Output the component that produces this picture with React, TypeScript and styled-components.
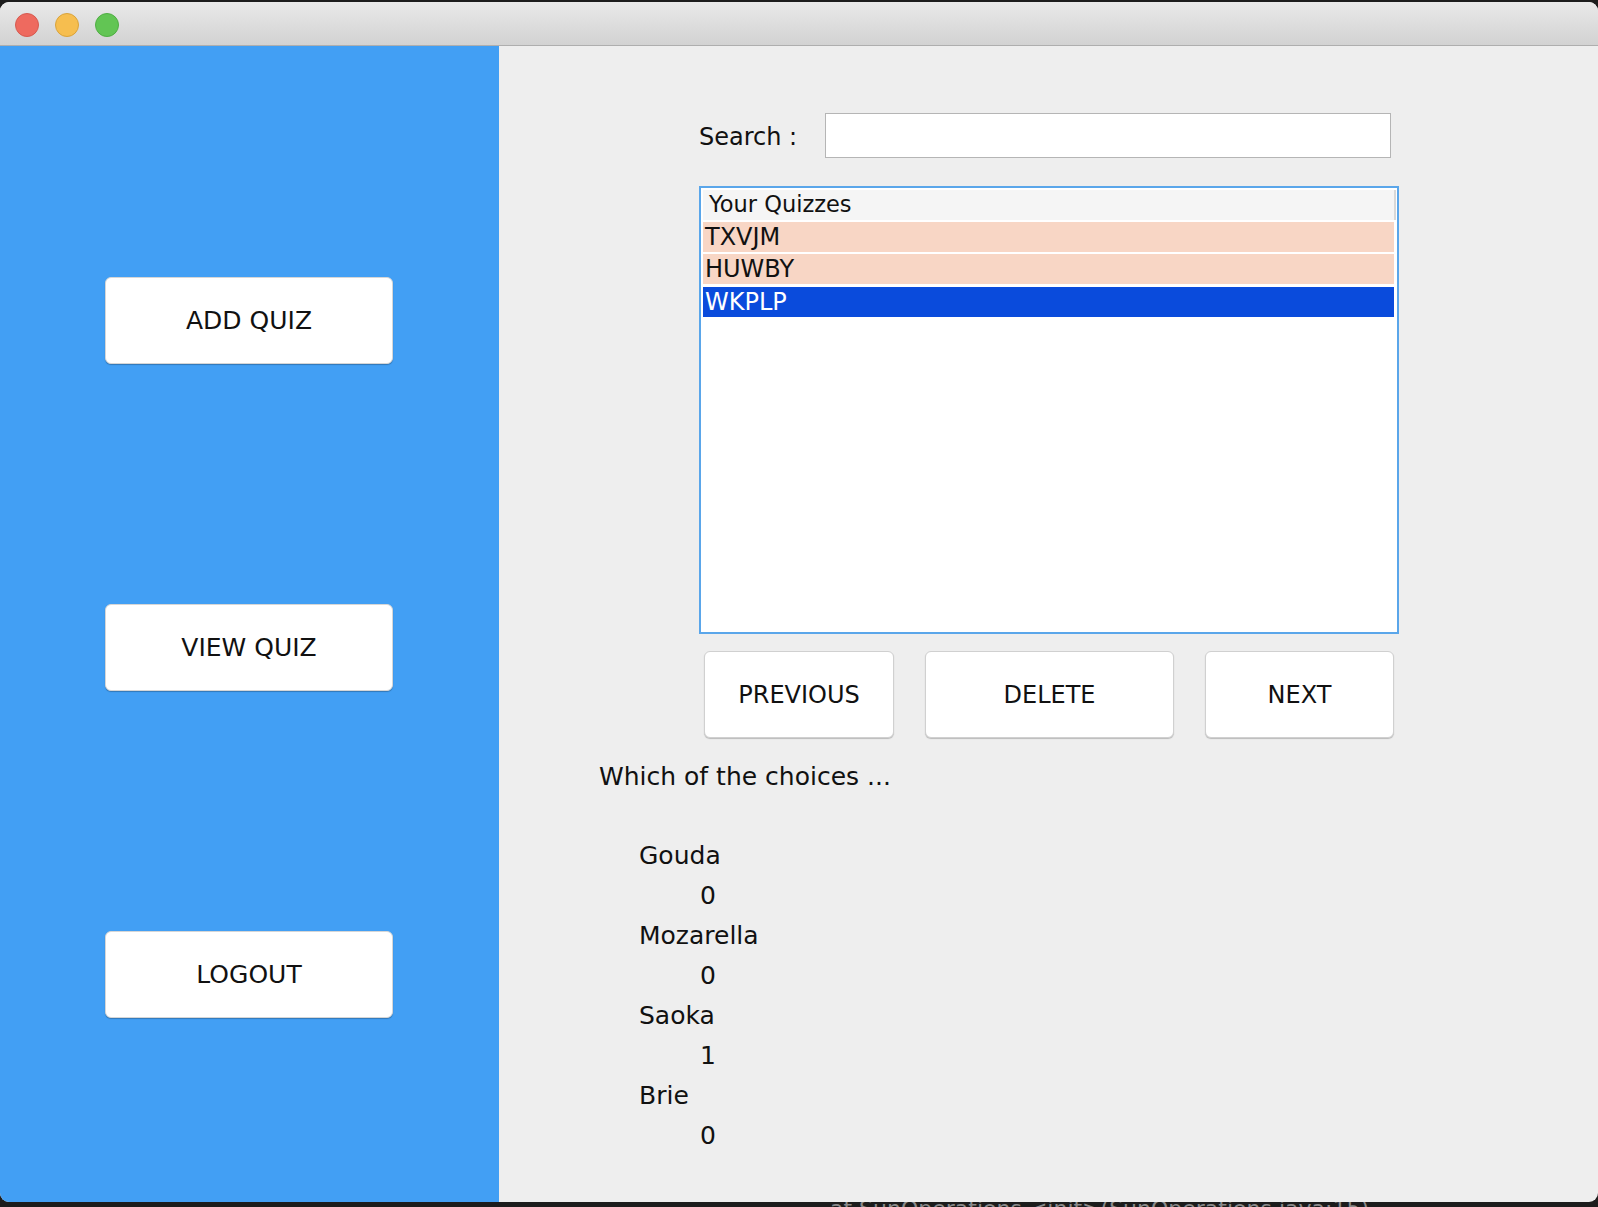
import React from "react";
import styled, { createGlobalStyle } from "styled-components";

const Global = createGlobalStyle`
  html, body { margin: 0; padding: 0; background: #1c1c1c; }
  body { font-family: "Lucida Grande", "DejaVu Sans", sans-serif; }
  * { box-sizing: border-box; }
`;

const Desktop = styled.div`
  width: 1598px;
  height: 1207px;
  background: #1c1c1c;
  padding-top: 2px;
  display: flex;
  flex-direction: column;
  overflow: hidden;
`;

const Window = styled.div`
  width: 1598px;
  height: 1200px;
  border-radius: 9px;
  overflow: hidden;
  display: flex;
  flex-direction: column;
  background: #eeeeee;
`;

const TitleBar = styled.div`
  height: 44px;
  flex: none;
  background: linear-gradient(#e9e9e9, #d2d2d2);
  border-bottom: 1px solid #aeaeae;
  display: flex;
  align-items: center;
  gap: 16px;
  padding-left: 15px;
  padding-top: 3px;
`;

const Light = styled.span<{ $c: string; $b: string }>`
  width: 24px;
  height: 24px;
  border-radius: 50%;
  background: ${(p) => p.$c};
  border: 1px solid ${(p) => p.$b};
`;

const Body = styled.div`
  flex: 1;
  display: flex;
  min-height: 0;
`;

const Sidebar = styled.div`
  width: 499px;
  flex: none;
  background: #429ff4;
  display: flex;
  flex-direction: column;
  padding: 231px 0 0 105px;
  gap: 240px;
`;

const SideButton = styled.button`
  width: 288px;
  height: 87px;
  background: #ffffff;
  border: 1px solid #d6d6d6;
  border-radius: 6px;
  box-shadow: 0 1px 1px rgba(0, 0, 0, 0.25);
  font-family: "Lucida Grande", "DejaVu Sans", sans-serif;
  font-size: 25px;
  color: #111;
  padding: 0;
  cursor: pointer;
`;

const Main = styled.div`
  flex: 1;
  display: flex;
  flex-direction: column;
  padding: 67px 0 0 100px;
  color: #111;
`;

const Block = styled.div`
  display: flex;
  flex-direction: column;
  padding-left: 100px;
  width: 800px;
`;

const SearchRow = styled.div`
  display: flex;
  align-items: center;
  height: 45px;
`;

const Label = styled.span`
  font-size: 24px;
  width: 126px;
  padding-top: 2px;
`;

const SearchInput = styled.input`
  width: 566px;
  height: 45px;
  border: 1px solid #b5b5b5;
  background: #fff;
  outline: none;
  font-size: 22px;
`;

const ListBox = styled.div`
  margin-top: 28px;
  width: 700px;
  height: 448px;
  border: 2px solid #5aa6ea;
  background: #fff;
  padding: 2px 3px 0 2px;
  display: flex;
  flex-direction: column;
  gap: 2px;
`;

const Header = styled.div`
  height: 30px;
  background: #f5f5f5;
  font-size: 22.5px;
  display: flex;
  align-items: center;
  padding-left: 6px;
  padding-bottom: 2px;
  border-right: 2px solid #d8d8d8;
  margin-right: -2px;
`;

const Row = styled.div<{ $selected?: boolean }>`
  height: 30px;
  margin-top: ${(p) => (p.$selected ? "1px" : "0")};
  background: ${(p) => (p.$selected ? "#0a4bdc" : "#f8d6c5")};
  color: ${(p) => (p.$selected ? "#ffffff" : "#111")};
  font-size: 24px;
  display: flex;
  align-items: center;
  padding-left: 2px;
`;

const ButtonRow = styled.div`
  margin-top: 17px;
  display: flex;
  gap: 31px;
  padding-left: 5px;
`;

const ActionButton = styled.button<{ $w: number }>`
  width: ${(p) => p.$w}px;
  height: 87px;
  background: #ffffff;
  border: 1px solid #d0d0d0;
  border-radius: 6px;
  box-shadow: 0 1px 1px rgba(0, 0, 0, 0.22);
  font-family: "Lucida Grande", "DejaVu Sans", sans-serif;
  font-size: 24px;
  color: #111;
  padding: 0;
`;

const Question = styled.div`
  margin-top: 19px;
  height: 40px;
  line-height: 40px;
  font-size: 25px;
`;

const Choices = styled.div`
  margin-top: 39px;
  padding-left: 40px;
  display: flex;
  flex-direction: column;
`;

const Choice = styled.div`
  height: 40px;
  line-height: 40px;
  font-size: 25px;
`;

const Count = styled(Choice)`
  padding-left: 61px;
`;

const Terminal = styled.div`
  height: 5px;
  overflow: hidden;
  padding-left: 830px;
  color: #8a8a8a;
  font-family: "DejaVu Sans", sans-serif;
  font-size: 22px;
  line-height: 14px;
  white-space: nowrap;
`;

const quizzes = ["TXVJM", "HUWBY", "WKPLP"];
const choices: [string, number][] = [
  ["Gouda", 0],
  ["Mozarella", 0],
  ["Saoka", 1],
  ["Brie", 0],
];

export default function App() {
  return (
    <>
      <Global />
      <Desktop>
        <Window>
          <TitleBar>
            <Light $c="#ee6a5f" $b="#d65a50" />
            <Light $c="#f6be4f" $b="#d9a33b" />
            <Light $c="#62c554" $b="#4fae43" />
          </TitleBar>
          <Body>
            <Sidebar>
              <SideButton>ADD QUIZ</SideButton>
              <SideButton>VIEW QUIZ</SideButton>
              <SideButton>LOGOUT</SideButton>
            </Sidebar>
            <Main>
              <Block>
                <SearchRow>
                  <Label>Search :</Label>
                  <SearchInput />
                </SearchRow>
                <ListBox>
                  <Header>Your Quizzes</Header>
                  {quizzes.map((q, i) => (
                    <Row key={q} $selected={i === 2}>
                      {q}
                    </Row>
                  ))}
                </ListBox>
                <ButtonRow>
                  <ActionButton $w={190}>PREVIOUS</ActionButton>
                  <ActionButton $w={249}>DELETE</ActionButton>
                  <ActionButton $w={189}>NEXT</ActionButton>
                </ButtonRow>
              </Block>
              <Question>Which of the choices ...</Question>
              <Choices>
                {choices.map(([name, n]) => (
                  <React.Fragment key={name}>
                    <Choice>{name}</Choice>
                    <Count>{n}</Count>
                  </React.Fragment>
                ))}
              </Choices>
            </Main>
          </Body>
        </Window>
        <Terminal>at SunOperations.&lt;init&gt;(SunOperations.java:15)</Terminal>
      </Desktop>
    </>
  );
}
